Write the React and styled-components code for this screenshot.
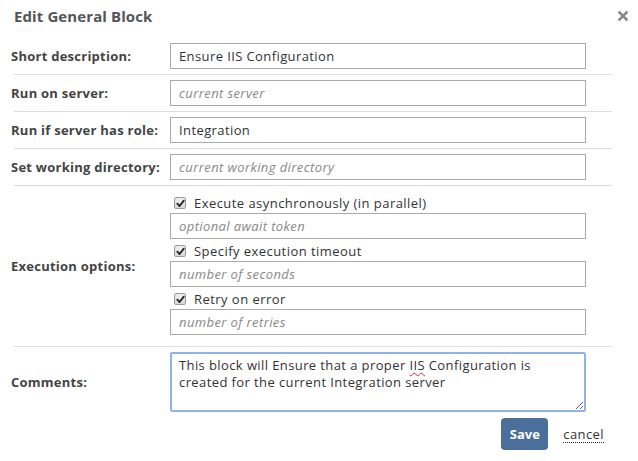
import React from "react";
import styled, { createGlobalStyle } from "styled-components";

const GlobalStyle = createGlobalStyle`
  html, body {
    margin: 0;
    padding: 0;
    background: #fff;
  }
  body {
    font-family: "Open Sans", "Noto Sans", sans-serif;
    color: #333;
  }
  * {
    box-sizing: border-box;
  }
`;

const Dialog = styled.div`
  width: 638px;
  height: 461px;
  background: #fff;
`;

const Header = styled.div`
  display: flex;
  align-items: center;
  justify-content: space-between;
  height: 32px;
  padding: 0 8px 0 14px;
`;

const Title = styled.h1`
  margin: 0;
  font-size: 15px;
  font-weight: 700;
  letter-spacing: 0.1px;
  color: #555;
`;

const Close = styled.button`
  border: 0;
  background: none;
  padding: 0;
  width: 14px;
  height: 14px;
  display: flex;
  align-items: center;
  justify-content: center;
  cursor: pointer;
`;

const Form = styled.div`
  padding-top: 6px;
`;

const Row = styled.div`
  display: grid;
  grid-template-columns: 156px 416px;
  align-items: center;
  margin: 0 26px 0 14px;
  padding: 5px 0;
  border-bottom: ${(props) => (props.last ? "none" : "1px solid #dddddd")};
`;

const Label = styled.label`
  margin-left: -3px;
  font-size: 13px;
  font-weight: 700;
  letter-spacing: 0.25px;
  color: #444;
  white-space: nowrap;
`;

const Input = styled.input`
  width: 416px;
  height: 26px;
  border: 1px solid #aaaaaa;
  padding: 0 8px;
  font-family: inherit;
  font-size: 13px;
  letter-spacing: 0.4px;
  color: #333;
  outline: none;
  &::placeholder {
    color: #888;
    font-style: italic;
  }
`;

const TextArea = styled.div`
  width: 416px;
  height: 60px;
  border: 2px solid #8fb4ec;
  border-radius: 2px;
  padding: 3px 7px;
  font-size: 13px;
  letter-spacing: 0.4px;
  line-height: 17px;
  color: #333;
  outline: none;
  overflow: auto;
  resize: vertical;
`;

const Misspelled = styled.span`
  text-decoration: underline wavy #e03030;
  text-decoration-thickness: 1px;
  text-underline-offset: 2px;
`;

const Options = styled.div`
  display: flex;
  flex-direction: column;
  padding-bottom: 6px;
`;

const Option = styled.div`
  display: flex;
  flex-direction: column;
  margin-top: 2px;
`;

const CheckLine = styled.label`
  display: flex;
  align-items: center;
  height: 20px;
  padding-left: 4px;
  gap: 8px;
  font-size: 13px;
  letter-spacing: 0.45px;
  color: #333;
`;

const Box = styled.span`
  width: 12px;
  height: 12px;
  border: 1px solid #9a9a9a;
  border-radius: 2px;
  background: linear-gradient(#f0f0f0, #d8d8d8);
  display: flex;
  align-items: center;
  justify-content: center;
`;

const Footer = styled.div`
  display: flex;
  justify-content: flex-end;
  align-items: center;
  gap: 15px;
  padding: 1px 34px 0 0;
`;

const SaveButton = styled.button`
  width: 47px;
  height: 32px;
  border: 0;
  border-radius: 4px;
  background: #4a6f9b;
  color: #fff;
  font-family: inherit;
  font-size: 13px;
  font-weight: 700;
  cursor: pointer;
`;

const CancelLink = styled.a`
  font-size: 13px;
  letter-spacing: 0.4px;
  color: #333;
  text-decoration: none;
  border-bottom: 1px dotted #333;
  line-height: 15px;
  margin-top: 2px;
  cursor: pointer;
`;

const Check = () => (
  <Box>
    <svg width="9" height="9" viewBox="0 0 10 10">
      <path
        d="M1.5 5.2 L4 7.8 L8.6 1.8"
        fill="none"
        stroke="#222"
        strokeWidth="2"
        strokeLinecap="round"
        strokeLinejoin="round"
      />
    </svg>
  </Box>
);

const options = [
  { title: "Execute asynchronously (in parallel)", placeholder: "optional await token" },
  { title: "Specify execution timeout", placeholder: "number of seconds" },
  { title: "Retry on error", placeholder: "number of retries" },
];

const App = () => {
  return (
    <>
      <GlobalStyle />
      <Dialog>
        <Header>
          <Title>Edit General Block</Title>
          <Close aria-label="close">
            <svg width="10" height="10" viewBox="0 0 10 10">
              <path
                d="M1.5 1.5 L8.5 8.5 M8.5 1.5 L1.5 8.5"
                stroke="#888"
                strokeWidth="2.6"
                strokeLinecap="square"
              />
            </svg>
          </Close>
        </Header>
        <Form>
          <Row>
            <Label>Short description:</Label>
            <Input defaultValue="Ensure IIS Configuration" />
          </Row>
          <Row>
            <Label>Run on server:</Label>
            <Input placeholder="current server" />
          </Row>
          <Row>
            <Label>Run if server has role:</Label>
            <Input defaultValue="Integration" />
          </Row>
          <Row>
            <Label>Set working directory:</Label>
            <Input placeholder="current working directory" />
          </Row>
          <Row>
            <Label>Execution options:</Label>
            <Options>
              {options.map((option) => (
                <Option key={option.title}>
                  <CheckLine>
                    <Check />
                    {option.title}
                  </CheckLine>
                  <Input placeholder={option.placeholder} />
                </Option>
              ))}
            </Options>
          </Row>
          <Row last>
            <Label>Comments:</Label>
            <TextArea contentEditable suppressContentEditableWarning>
              This block will Ensure that a proper <Misspelled>IIS</Misspelled>{" "}
              Configuration is
              <br />
              created for the current Integration server
            </TextArea>
          </Row>
        </Form>
        <Footer>
          <SaveButton>Save</SaveButton>
          <CancelLink>cancel</CancelLink>
        </Footer>
      </Dialog>
    </>
  );
};

export default App;
